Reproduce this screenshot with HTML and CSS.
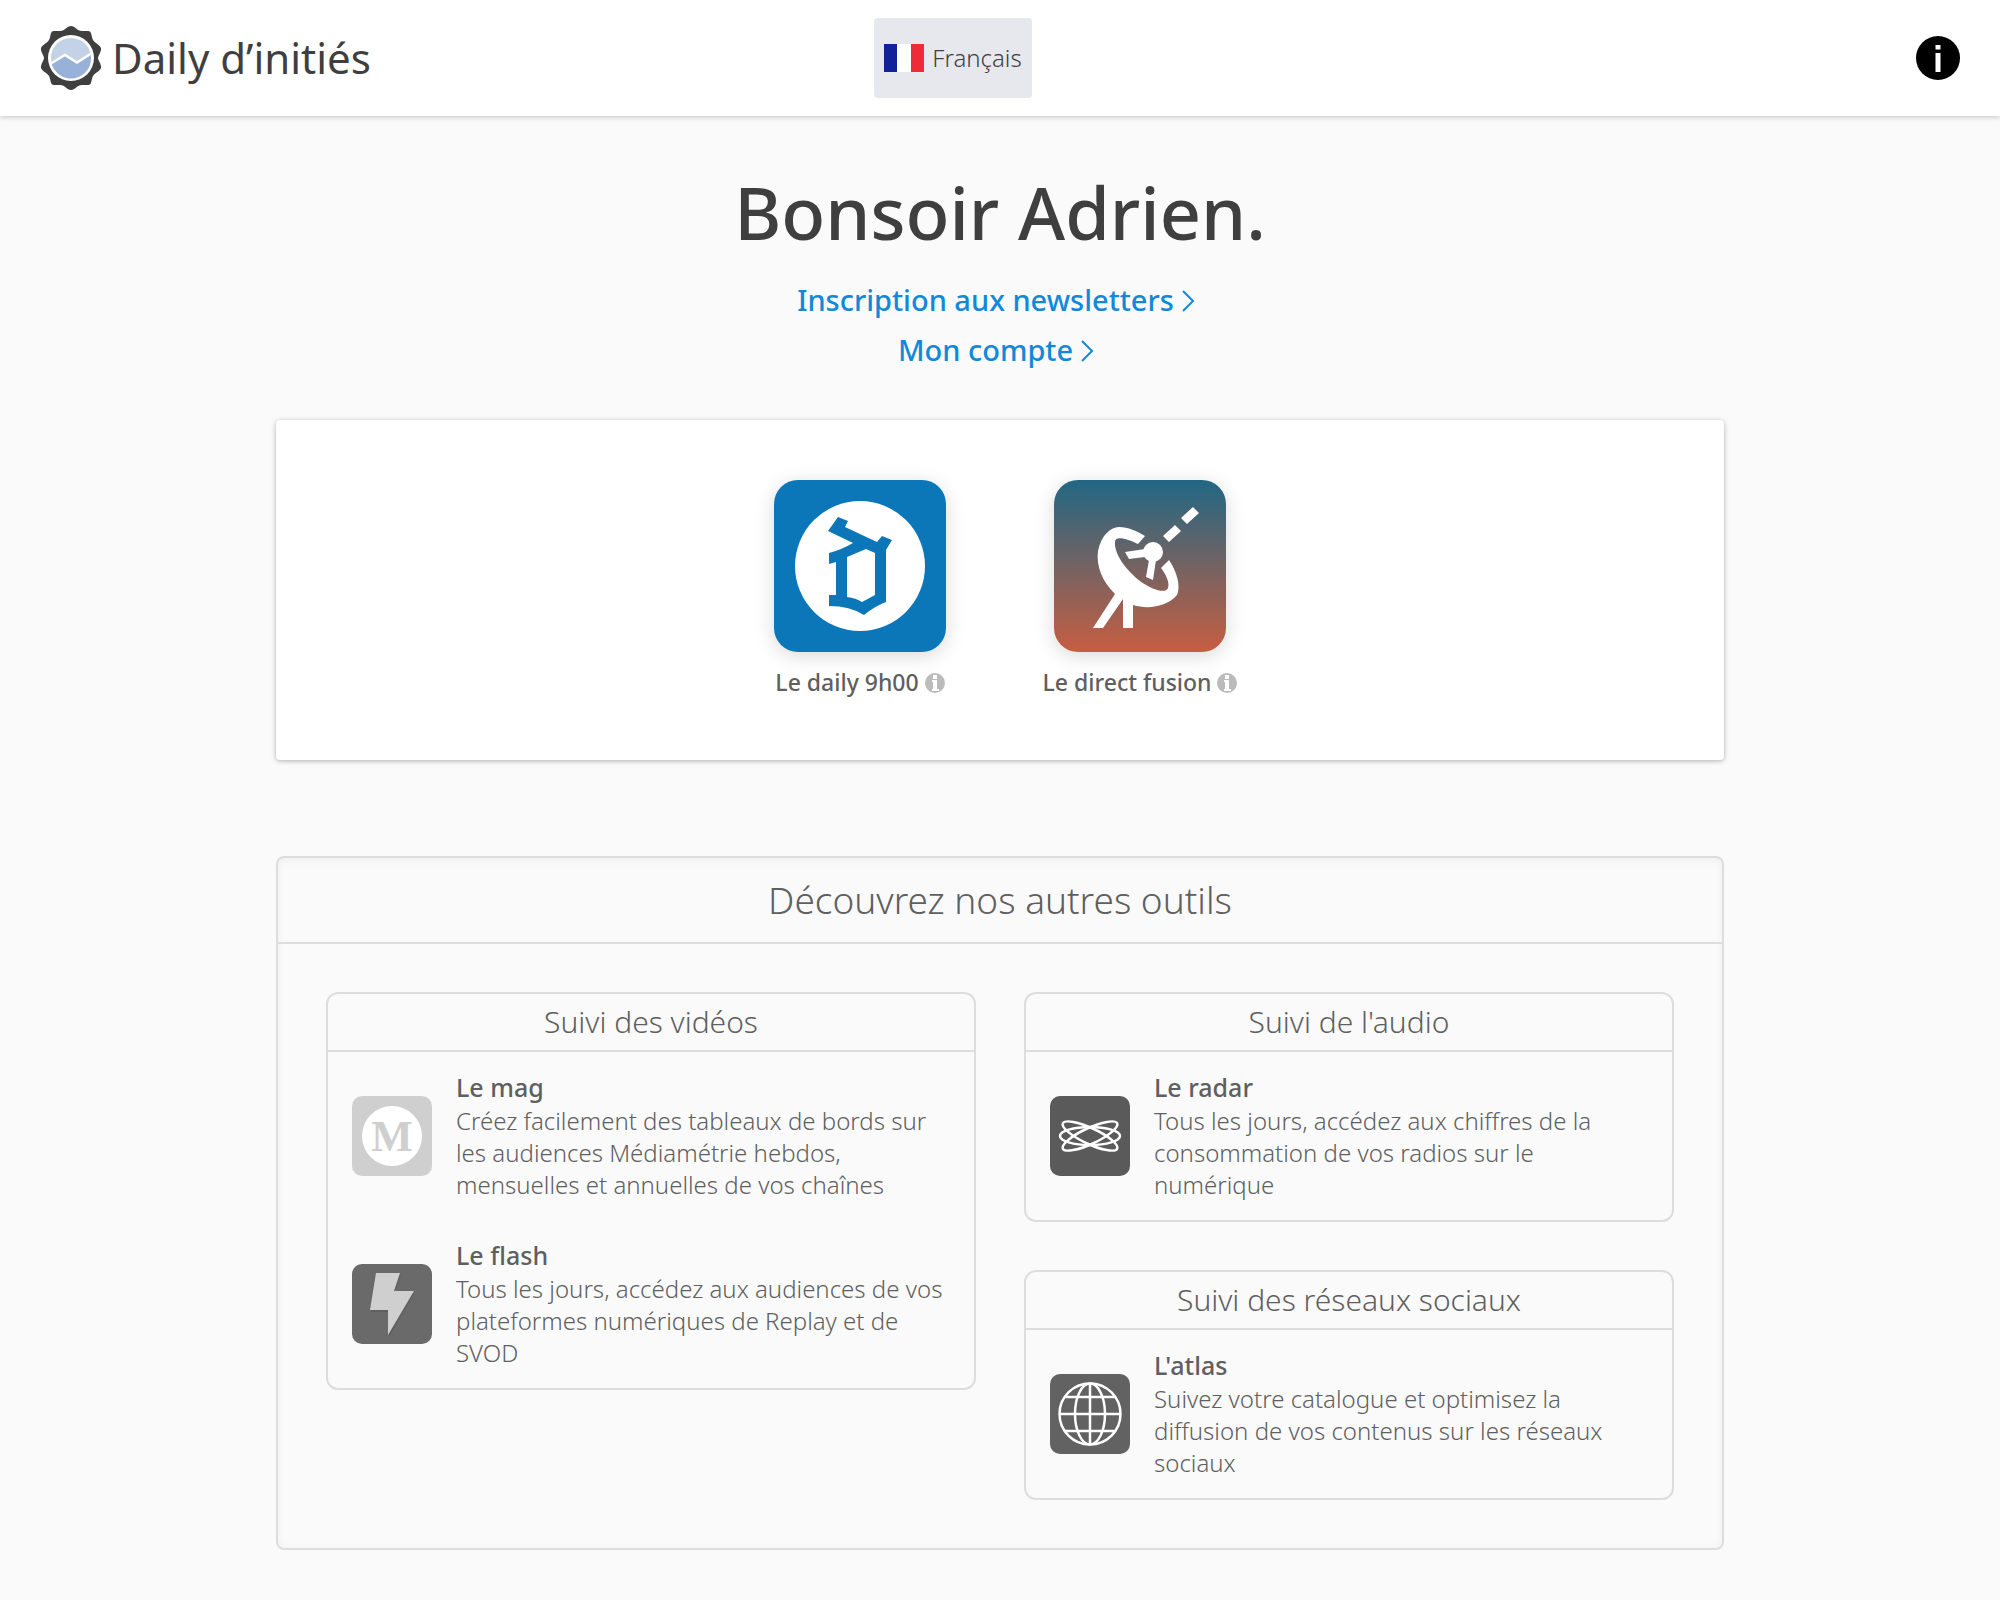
FILE: index.html
```
<!DOCTYPE html>
<html lang="fr">
<head>
  <meta charset="UTF-8">
  <meta name="viewport" content="width=device-width, initial-scale=1.0">
  <title>Daily d’initiés</title>
  <link rel="stylesheet" href="styles.css">
</head>
<body>

  <header class="topbar">
    <a href="#" class="brand">
      <svg class="brand-logo" viewBox="0 0 62 64" aria-hidden="true">
        <path fill="#3f3f3f" d="M31 0 C35 0 37 5 42 5 L48 5 C52 5 51 10 53 14 C55 18 62 19 61 24 C60 28 58 30 58 32 C58 34 60 36 61 40 C62 45 55 46 53 50 C51 54 52 59 48 59 L42 59 C37 59 35 64 31 64 C27 64 25 59 20 59 L14 59 C10 59 11 54 9 50 C7 46 0 45 1 40 C2 36 4 34 4 32 C4 30 2 28 1 24 C0 19 7 18 9 14 C11 10 10 5 14 5 L20 5 C25 5 27 0 31 0 Z"/>
        <circle cx="31" cy="32" r="23" fill="#fff"/>
        <circle cx="31" cy="32" r="20" fill="#c4d2e8"/>
        <path fill="#97b1d8" d="M11.500 37 L25 29 L37 36.500 L50.500 28 A20 20 0 0 1 11.500 37 Z"/>
        <path fill="none" stroke="#fff" stroke-width="2.500" d="M10 38 L25 29 L37 36.500 L52 27"/>
      </svg>
      <span class="brand-name">Daily d’initiés</span>
    </a>

    <button type="button" class="lang">
      <svg class="flag" viewBox="0 0 40 28" aria-hidden="true">
        <rect width="40" height="28" fill="#fff"/>
        <rect width="13" height="28" fill="#12239a"/>
        <rect x="27" width="13" height="28" fill="#ee2b37"/>
      </svg>
      Français
    </button>

    <button type="button" class="info-btn" aria-label="Informations">
      <svg viewBox="0 0 44 44" aria-hidden="true">
        <circle cx="22" cy="22" r="22" fill="#000"/>
        <path fill="#fff" d="M19.500 9h5v4.500h-5z M19.500 17h5v19h-5z"/>
      </svg>
    </button>
  </header>

  <main class="page">
    <h1>Bonsoir Adrien.</h1>

    <nav class="links">
      <a href="#">
        Inscription aux newsletters
        <svg class="chevron" viewBox="0 0 14 24" aria-hidden="true"><path d="M2 2l10 10L2 22"/></svg>
      </a>
      <a href="#">
        Mon compte
        <svg class="chevron" viewBox="0 0 14 24" aria-hidden="true"><path d="M2 2l10 10L2 22"/></svg>
      </a>
    </nav>

    <section class="apps">
      <a href="#" class="app">
        <svg class="app-icon" viewBox="0 0 172 172" aria-hidden="true">
          <rect width="172" height="172" fill="#0c77b8"/>
          <circle cx="86" cy="86" r="65" fill="#fff"/>
          <path fill="#0c77b8" fill-rule="evenodd" d="M64 37 L74 41 L71 47 L103 62 L108 56 L118 60 L112 70 V122 Q101 126 90 135 Q76 126 55 126 V115 H62 V82 L55 84 V73 Q67 70 79 63 L54 51 Z M73 77 V117 Q82 118 88 122 L101 115 V73 L92 69 Z"/>
        </svg>
        <span class="app-label">Le daily 9h00
          <svg class="info-dot" viewBox="0 0 20 20" aria-hidden="true"><circle cx="10" cy="10" r="10" fill="#bbb"/><path fill="#fff" d="M8 2h4v4H8z M7 7h5v9h2v2H7v-2h1V9H7z"/></svg>
        </span>
      </a>
      <a href="#" class="app">
        <svg class="app-icon" viewBox="0 0 172 172" aria-hidden="true">
          <defs>
            <linearGradient id="direct" x1="0" y1="0" x2="0" y2="1">
              <stop offset="0" stop-color="#216784"/>
              <stop offset="1" stop-color="#c75e41"/>
            </linearGradient>
          </defs>
          <rect width="172" height="172" fill="url(#direct)"/>
          <g fill="#fff">
            <path d="M127 38 L139 27 L145 33 L133 44 Z M109 56 L121 45 L127 51 L115 62 Z"/>
            <path d="M91 56 L84 64 C74 59 61 55 61 62 C60 74 72 90 86 101 C98 110 112 114 114 108 C116 102 111 93 107 88 L115 80 C123 92 127 106 123 115 C114 126 95 130 79 125 V148 H69 V119 L49 148 H39 L61 114 C48 101 42 86 44 71 C47 56 56 47 65 47 C74 47 83 51 91 56 Z"/>
            <circle cx="99" cy="72" r="10"/>
            <path d="M91 69 L71 72 L75 79 L91 77 Z M95 80 L92 97 L99 100 L102 80 Z"/>
          </g>
        </svg>
        <span class="app-label">Le direct fusion
          <svg class="info-dot" viewBox="0 0 20 20" aria-hidden="true"><circle cx="10" cy="10" r="10" fill="#bbb"/><path fill="#fff" d="M8 2h4v4H8z M7 7h5v9h2v2H7v-2h1V9H7z"/></svg>
        </span>
      </a>
    </section>

    <section class="discover">
      <h2>Découvrez nos autres outils</h2>
      <div class="columns">
        <div class="column">
          <section class="group">
            <h3>Suivi des vidéos</h3>
            <a href="#" class="tool">
              <svg class="tool-icon" viewBox="0 0 80 80" aria-hidden="true">
                <rect width="80" height="80" fill="#cfcfcf"/>
                <circle cx="40" cy="40" r="30" fill="#fff"/>
                <text class="mag-letter" x="40" y="55" text-anchor="middle">M</text>
              </svg>
              <span class="tool-text">
                <strong>Le mag</strong>
                <span>Créez facilement des tableaux de bords sur les audiences Médiamétrie hebdos, mensuelles et annuelles de vos chaînes</span>
              </span>
            </a>
            <a href="#" class="tool">
              <svg class="tool-icon" viewBox="0 0 80 80" aria-hidden="true">
                <rect width="80" height="80" fill="#6a6a6a"/>
                <path fill="#5f5f5f" d="M25 10 H49 L43 28 H63 L37 73 V48 H19 Z"/>
                <path fill="#cfcfcf" d="M24 9 H48 L42 27 H62 L36 71 V46 H18 Z"/>
              </svg>
              <span class="tool-text">
                <strong>Le flash</strong>
                <span>Tous les jours, accédez aux audiences de vos plateformes numériques de Replay et de SVOD</span>
              </span>
            </a>
          </section>
        </div>

        <div class="column">
          <section class="group">
            <h3>Suivi de l'audio</h3>
            <a href="#" class="tool">
              <svg class="tool-icon" viewBox="0 0 80 80" aria-hidden="true">
                <rect width="80" height="80" fill="#5a5a5a"/>
                <g fill="none" stroke="#fff" stroke-width="2.500">
                  <ellipse cx="40" cy="40" rx="30" ry="9"/>
                  <ellipse cx="40" cy="40" rx="30" ry="8" transform="rotate(25 40 40)"/>
                  <ellipse cx="40" cy="40" rx="30" ry="8" transform="rotate(-25 40 40)"/>
                </g>
              </svg>
              <span class="tool-text">
                <strong>Le radar</strong>
                <span>Tous les jours, accédez aux chiffres de la consommation de vos radios sur le numérique</span>
              </span>
            </a>
          </section>
          <section class="group">
            <h3>Suivi des réseaux sociaux</h3>
            <a href="#" class="tool">
              <svg class="tool-icon" viewBox="0 0 80 80" aria-hidden="true">
                <rect width="80" height="80" fill="#626262"/>
                <g fill="none" stroke="#fff" stroke-width="2.500">
                  <circle cx="40" cy="40" r="30.500"/>
                  <ellipse cx="40" cy="40" rx="15" ry="30.500"/>
                  <path d="M40 9V71 M9 40H71 M15 23H65 M15 57H65"/>
                </g>
              </svg>
              <span class="tool-text">
                <strong>L'atlas</strong>
                <span>Suivez votre catalogue et optimisez la diffusion de vos contenus sur les réseaux sociaux</span>
              </span>
            </a>
          </section>
        </div>
      </div>
    </section>
  </main>

</body>
</html>
```
FILE: styles.css
```
* {
  box-sizing: border-box;
}

body {
  margin: 0;
  font-family: "Noto Sans", "Open Sans", sans-serif;
  font-weight: 350;
  font-size: 24px;
  line-height: 32px;
  color: #5f5f5f;
  background: #fafafa;
}

a {
  color: inherit;
  text-decoration: none;
}

button {
  font: inherit;
  border: none;
  cursor: pointer;
}

h1, h2, h3 {
  margin: 0;
  font-weight: 350;
  text-align: center;
}

.topbar {
  display: grid;
  grid-template-columns: 1fr auto 1fr;
  align-items: center;
  height: 116px;
  padding: 0 40px;
  background: #fff;
  box-shadow: 0 0 6px rgba(0, 0, 0, 0.3);
}

.brand {
  display: flex;
  align-items: center;
  gap: 10px;
  color: #3f3f3f;
}

.brand-logo {
  width: 62px;
  height: 64px;
}

.brand-name {
  font-size: 42px;
  font-weight: 400;
  line-height: 48px;
}

.lang {
  display: flex;
  align-items: center;
  gap: 8px;
  height: 80px;
  margin-right: 94px;
  padding: 0 10px;
  border-radius: 4px;
  background: #e7e8ee;
  color: #3f3f3f;
}

.flag {
  width: 40px;
  height: 28px;
}

.info-btn {
  justify-self: end;
  width: 44px;
  height: 44px;
  padding: 0;
  background: none;
}

.info-btn svg {
  display: block;
}

.page {
  max-width: 1496px;
  margin: 0 auto;
  padding: 48px 24px;
}

h1 {
  font-size: 72px;
  font-weight: 500;
  line-height: 96px;
  color: #3f3f3f;
}

.links {
  display: flex;
  flex-direction: column;
  align-items: center;
  padding: 15px 8px 45px 0;
  font-size: 29px;
  font-weight: 500;
  line-height: 50px;
  color: #1289d8;
}

.links a {
  display: flex;
  align-items: center;
  gap: 7px;
}

.chevron {
  width: 14px;
  height: 24px;
  margin-top: 2px;
  fill: none;
  stroke: currentColor;
  stroke-width: 2;
}

.apps {
  display: flex;
  justify-content: center;
  padding: 60px 0 62px;
  border-radius: 4px;
  background: #fff;
  box-shadow: 0 1px 5px rgba(0, 0, 0, 0.3);
}

.app {
  display: flex;
  flex-direction: column;
  align-items: center;
  gap: 14px;
  width: 280px;
  font-size: 23px;
  font-weight: 500;
}

.app-icon {
  width: 172px;
  height: 172px;
  border-radius: 24px;
  box-shadow: 0 4px 20px rgba(0, 0, 0, 0.15);
}

.info-dot {
  width: 20px;
  height: 20px;
  vertical-align: -2px;
}

.discover {
  margin-top: 96px;
  border: 2px solid #ddd;
  border-radius: 8px;
  box-shadow: inset 0 2px 8px rgba(0, 0, 0, 0.05);
}

h2 {
  padding: 18px;
  border-bottom: 2px solid #ddd;
  font-size: 37px;
  line-height: 48px;
}

.columns {
  display: grid;
  grid-template-columns: 1fr 1fr;
  gap: 48px;
  padding: 48px;
}

.column {
  display: flex;
  flex-direction: column;
  gap: 48px;
}

.group {
  border: 2px solid #ddd;
  border-radius: 12px;
}

h3 {
  padding: 8px;
  border-bottom: 2px solid #ddd;
  font-size: 30px;
  line-height: 40px;
}

.tool {
  display: flex;
  align-items: center;
  gap: 24px;
  padding: 19px 24px;
}

.tool-icon {
  flex: none;
  width: 80px;
  height: 80px;
  border-radius: 10px;
}

.mag-letter {
  font-family: "Liberation Serif", serif;
  font-size: 44px;
  font-weight: 700;
  fill: #cfcfcf;
}

.tool-text strong {
  display: block;
  margin-bottom: 2px;
  font-size: 25px;
  font-weight: 500;
}
```
